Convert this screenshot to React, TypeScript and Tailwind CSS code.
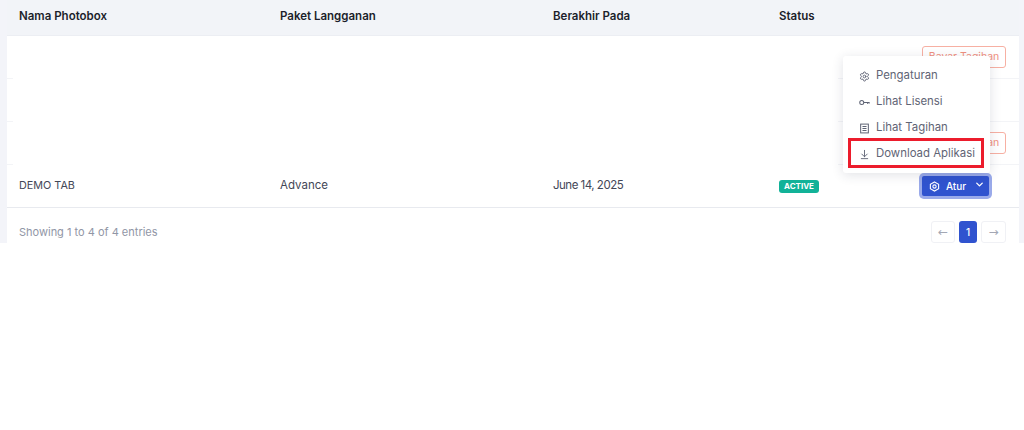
import { ArrowDownToLine, ChevronDown, Settings } from "lucide-react";

function KeyIcon() {
  return (
    <svg viewBox="0 0 12 12" className="h-[11px] w-[11px]" fill="none" stroke="currentColor" strokeWidth="1.1">
      <circle cx="3" cy="6" r="2.2" />
      <path d="M5.2 6H11.5M9.5 6V7.6M11.2 6V7.2" />
    </svg>
  );
}

function BillIcon() {
  return (
    <svg viewBox="0 0 12 12" className="h-[11px] w-[11px]" fill="none" stroke="currentColor" strokeWidth="1.1">
      <rect x="1.8" y="1.2" width="8.4" height="9.6" />
      <path d="M3.8 3.8H8.2M3.8 6H8.2M3.8 8.2H8.2" />
    </svg>
  );
}

function AturIcon() {
  return (
    <svg viewBox="0 0 12 12" className="h-[11px] w-[11px]" fill="none" stroke="currentColor" strokeWidth="1.2">
      <path d="M6 1 10.5 3.5V8.5L6 11 1.5 8.5V3.5Z" />
      <circle cx="6" cy="6" r="1.8" />
    </svg>
  );
}

const menuItems = [
  { label: "Pengaturan", icon: <Settings className="h-[11px] w-[11px]" /> },
  { label: "Lihat Lisensi", icon: <KeyIcon /> },
  { label: "Lihat Tagihan", icon: <BillIcon /> },
];

function PayButton() {
  return (
    <button type="button" className="h-[22px] w-[84px] whitespace-nowrap rounded-[3px] border border-[#f7b0a3] text-center text-[10.5px] text-[#f0907f]">
      Bayar Tagihan
    </button>
  );
}

function EmptyRow({ action }: { action?: boolean }) {
  return (
    <div className="flex h-[43px] items-center justify-end border-b border-[#f3f4f7] pr-[13px]">
      {action && <PayButton />}
    </div>
  );
}

export default function App() {
  return (
    <div className="h-[430px] bg-white font-['Inter',sans-serif] text-[#434757]">
      <div className="flex h-[243px] bg-[#f3f4f9] pl-[7px] pr-[5px]">
        <div className="relative flex-1 overflow-hidden bg-white">
          {/* table head */}
          <div className="grid h-[36px] grid-cols-[261px_273px_226px_1fr] items-center border-b border-[#eceef3] bg-[#f2f4f8] pb-[2px] pl-[12px] text-[11.5px] font-semibold text-[#1c1f2b]">
            <span>Nama Photobox</span>
            <span>Paket Langganan</span>
            <span>Berakhir Pada</span>
            <span>Status</span>
          </div>

          <EmptyRow action />
          <EmptyRow />
          <EmptyRow action />

          <div className="grid h-[43px] grid-cols-[261px_273px_226px_143px_1fr] items-center border-b border-[#e8eaef] pl-[12px] text-[11.5px]">
            <span className="text-[10.8px]">DEMO TAB</span>
            <span>Advance</span>
            <span className="tracking-[-0.5px]">June 14, 2025</span>
            <span className="w-[40px] rounded-[3px] bg-[#12b298] py-[1px] text-center text-[8px] font-bold leading-[11px] text-white">ACTIVE</span>
            <button type="button" className="flex h-[20px] w-[67px] items-center gap-[6px] rounded-[2px] bg-[#3053cf] pl-[7px] text-[10px] font-medium text-white shadow-[0_0_0_3px_#9aaaea]">
              <AturIcon />
              Atur
              <ChevronDown className="mb-[4px] ml-[2px] h-[11px] w-[11px]" strokeWidth={3} />
            </button>
          </div>

          {/* footer */}
          <div className="flex h-[35px] items-start justify-between pl-[12px] pr-[13px] pt-[13px]">
            <span className="mt-[3px] text-[11px] leading-[16px] text-[#9196a6]">Showing 1 to 4 of 4 entries</span>
            <div className="flex items-center gap-[4px]">
              <button type="button" className="flex h-[22px] w-[24px] items-center justify-center rounded-[3px] border border-[#f0f1f5] font-['DejaVu_Sans',sans-serif] text-[12px] text-[#a3a7b4]">
                ←
              </button>
              <button type="button" className="h-[22px] w-[18px] rounded-[3px] bg-[#3053cf] text-[10px] font-medium text-white">1</button>
              <button type="button" className="flex h-[22px] w-[25px] items-center justify-center rounded-[3px] border border-[#f0f1f5] font-['DejaVu_Sans',sans-serif] text-[12px] text-[#a3a7b4]">
                →
              </button>
            </div>
          </div>

          {/* white patch over the hidden row content */}
          <div className="absolute left-[6px] top-[36px] h-[129px] w-[825px] bg-white" />

          {/* dropdown menu */}
          <div className="absolute left-[836px] top-[56px] w-[147px] rounded-[3px] bg-white pb-[6px] pt-[7px] text-[11.4px] text-[#5f6475] shadow-[0_2px_12px_rgba(40,50,80,0.14)]">
            {menuItems.map(({ label, icon }) => (
              <div key={label} className="flex h-[26px] items-center gap-[6px] pl-[16px]">
                {icon}
                {label}
              </div>
            ))}
            <div className="relative flex h-[26px] items-center gap-[6px] pl-[16px]">
              <ArrowDownToLine className="h-[11px] w-[11px]" />
              Download Aplikasi
              <div className="absolute -top-[3px] left-[5px] h-[30px] w-[136px] border-[3px] border-[#ec1c2c]" />
            </div>
          </div>
        </div>
      </div>
    </div>
  );
}
